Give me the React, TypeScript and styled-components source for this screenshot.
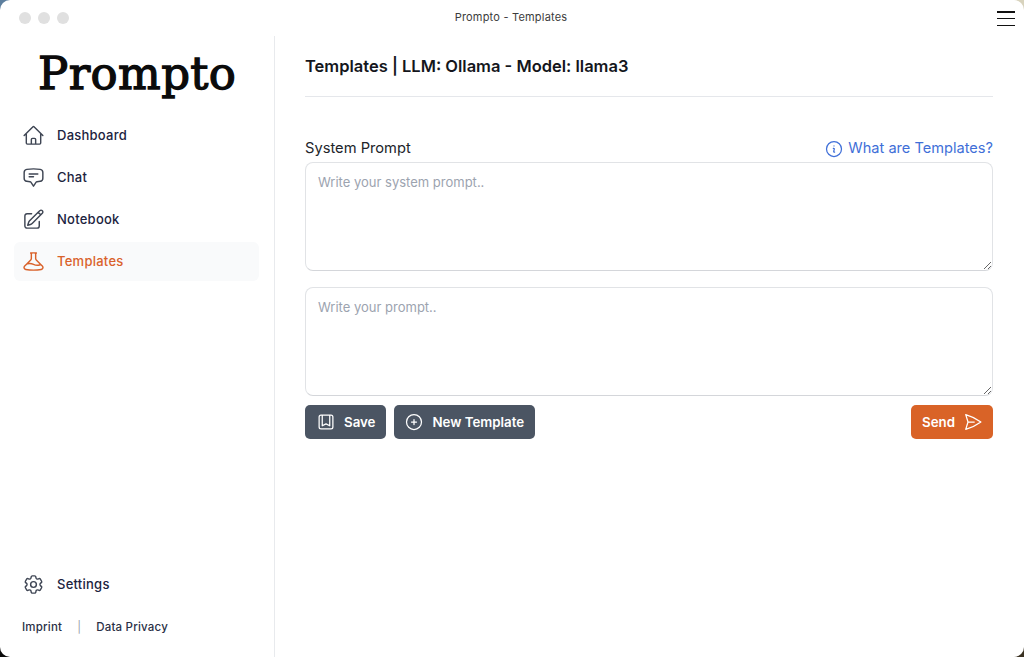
import { createGlobalStyle, styled } from "styled-components";
import {
  HiOutlineBeaker,
  HiOutlineBookmarkSquare,
  HiOutlineChatBubbleBottomCenterText,
  HiOutlineCog6Tooth,
  HiOutlineHome,
  HiOutlineInformationCircle,
  HiOutlinePaperAirplane,
  HiOutlinePencilSquare,
  HiOutlinePlusCircle,
} from "react-icons/hi2";

const GlobalStyle = createGlobalStyle`
  * { box-sizing: border-box; }
  html, body { margin: 0; height: 100%; }
  /* the desktop behind the rounded window corners */
  html { background: conic-gradient(#d8d3bd 0 25%, #3a3222 0 50%, #0a0a0a 0 75%, #5d7f9e 0); }
  body { font-family: Inter, "Liberation Sans", sans-serif; -webkit-font-smoothing: antialiased; }
  #root { height: 100%; }
`;

const Window = styled.div`
  width: 1024px;
  height: 657px;
  background: #fff;
  border-radius: 10px;
  overflow: hidden;
  display: flex;
  flex-direction: column;
`;

const TitleBar = styled.header`
  height: 36px;
  flex: none;
  display: flex;
  align-items: center;
  position: relative;
  padding-left: 19px;
`;

const Lights = styled.div`
  display: flex;
  gap: 7px;
`;

const Light = styled.span`
  width: 12px;
  height: 12px;
  border-radius: 50%;
  background: #e0e0e0;
`;

const WindowTitle = styled.div`
  position: absolute;
  left: 0;
  right: 2px;
  top: 10px;
  text-align: center;
  font-size: 11px;
  line-height: 14px;
  letter-spacing: 0.2px;
  color: #3c3c3c;
`;

const Burger = styled.div`
  position: absolute;
  left: 997px;
  top: 11px;
  width: 18px;
  height: 15px;
  display: flex;
  flex-direction: column;
  justify-content: space-between;

  span {
    height: 1.5px;
    background: #111;
  }
`;

const Body = styled.div`
  flex: 1;
  display: flex;
  min-height: 0;
`;

const Sidebar = styled.aside`
  width: 275px;
  flex: none;
  border-right: 1px solid #e8eaed;
  padding: 0 15px 0 14px;
  display: flex;
  flex-direction: column;
`;

const Logo = styled.div`
  height: 62px;
  margin-top: 6px;
  padding-left: 24px;
  font-family: "DejaVu Serif", serif;
  font-size: 45px;
  line-height: 64px;
  letter-spacing: 0.4px;
  color: #0b0b0b;
  -webkit-text-stroke: 1.3px #0b0b0b;
`;

const Nav = styled.nav`
  margin-top: 12px;
  display: flex;
  flex-direction: column;
  gap: 3px;
`;

const NavItem = styled.a<{ $active?: boolean }>`
  height: 39px;
  padding: 0 0 1px 8px;
  display: flex;
  align-items: center;
  gap: 12px;
  border-radius: 6px;
  font-size: 13px;
  font-weight: 500;
  letter-spacing: 0.25px;
  color: ${(p) => (p.$active ? "#d9622b" : "#1c2340")};
  background: ${(p) => (p.$active ? "#f9fafb" : "transparent")};

  svg {
    width: 23px;
    height: 23px;
    flex: none;
    color: ${(p) => (p.$active ? "#d9622b" : "#3f4654")};
  }
`;

const Spacer = styled.div`
  flex: 1;
`;

const FooterLinks = styled.div`
  margin: 16px 0 23px 8px;
  display: flex;
  align-items: center;
  font-size: 11.5px;
  font-weight: 500;
  line-height: 14px;
  letter-spacing: 0.2px;
  color: #2a3046;
`;

const Divider = styled.span`
  margin: 0 15px;
  color: #9aa0aa;
  font-weight: 400;
`;

const Main = styled.main`
  flex: 1;
  padding: 0 31px 0 30px;
`;

const PageTitle = styled.h1`
  margin: 0;
  height: 61px;
  padding-top: 19px;
  border-bottom: 1px solid #e5e7eb;
  font-size: 16.5px;
  font-weight: 600;
  line-height: 22px;
  color: #14161c;
`;

const LabelRow = styled.div`
  margin-top: 41px;
  height: 24px;
  padding-bottom: 5px;
  display: flex;
  align-items: center;
  justify-content: space-between;
`;

const Label = styled.label`
  font-size: 14.7px;
  font-weight: 400;
  color: #22242a;
`;

const HelpLink = styled.a`
  display: flex;
  align-items: center;
  gap: 4px;
  font-size: 14.6px;
  color: #3f6fd8;

  svg {
    width: 20px;
    height: 20px;
    margin-top: 2px;
  }
`;

const PromptBox = styled.textarea`
  display: block;
  width: 100%;
  height: 109px;
  margin: 0 0 16px;
  padding: 10px 12px;
  border: 1px solid #e1e3e6;
  border-bottom-color: #d4d6da;
  border-radius: 8px;
  outline: none;
  resize: vertical;
  background: #fff;
  font-family: inherit;
  font-size: 13px;
  line-height: 18px;
  color: #222;

  &::placeholder {
    color: #9ca3af;
  }
`;

const Actions = styled.div`
  margin-top: -7px;
  display: flex;
  gap: 8px;
`;

const Button = styled.button<{ $primary?: boolean }>`
  height: 34px;
  display: flex;
  align-items: center;
  gap: 8px;
  padding: ${(p) => (p.$primary ? "0 10px 0 11px" : "0 11px 0 10px")};
  margin-left: ${(p) => (p.$primary ? "auto" : "0")};
  border: none;
  border-radius: 5px;
  background: ${(p) => (p.$primary ? "#d96327" : "#4b5563")};
  color: #fff;
  font-family: inherit;
  font-size: 13.3px;
  font-weight: 600;

  svg {
    width: 20px;
    height: 20px;
    flex: none;
  }
`;

const SaveButton = styled(Button)`
  padding-left: 11px;
`;

export default function App() {
  return (
    <>
      <GlobalStyle />
      <Window>
        <TitleBar>
          <Lights>
            <Light />
            <Light />
            <Light />
          </Lights>
          <WindowTitle>Prompto - Templates</WindowTitle>
          <Burger>
            <span />
            <span />
            <span />
          </Burger>
        </TitleBar>
        <Body>
          <Sidebar>
            <Logo>Prompto</Logo>
            <Nav>
              <NavItem>
                <HiOutlineHome />
                Dashboard
              </NavItem>
              <NavItem>
                <HiOutlineChatBubbleBottomCenterText />
                Chat
              </NavItem>
              <NavItem>
                <HiOutlinePencilSquare />
                Notebook
              </NavItem>
              <NavItem $active>
                <HiOutlineBeaker />
                Templates
              </NavItem>
            </Nav>
            <Spacer />
            <NavItem>
              <HiOutlineCog6Tooth />
              Settings
            </NavItem>
            <FooterLinks>
              <span>Imprint</span>
              <Divider>|</Divider>
              <span>Data Privacy</span>
            </FooterLinks>
          </Sidebar>
          <Main>
            <PageTitle>Templates | LLM: Ollama - Model: llama3</PageTitle>
            <LabelRow>
              <Label>System Prompt</Label>
              <HelpLink>
                <HiOutlineInformationCircle />
                What are Templates?
              </HelpLink>
            </LabelRow>
            <PromptBox placeholder="Write your system prompt.." />
            <PromptBox placeholder="Write your prompt.." />
            <Actions>
              <SaveButton>
                <HiOutlineBookmarkSquare />
                Save
              </SaveButton>
              <Button>
                <HiOutlinePlusCircle />
                New Template
              </Button>
              <Button $primary>
                Send
                <HiOutlinePaperAirplane />
              </Button>
            </Actions>
          </Main>
        </Body>
      </Window>
    </>
  );
}
